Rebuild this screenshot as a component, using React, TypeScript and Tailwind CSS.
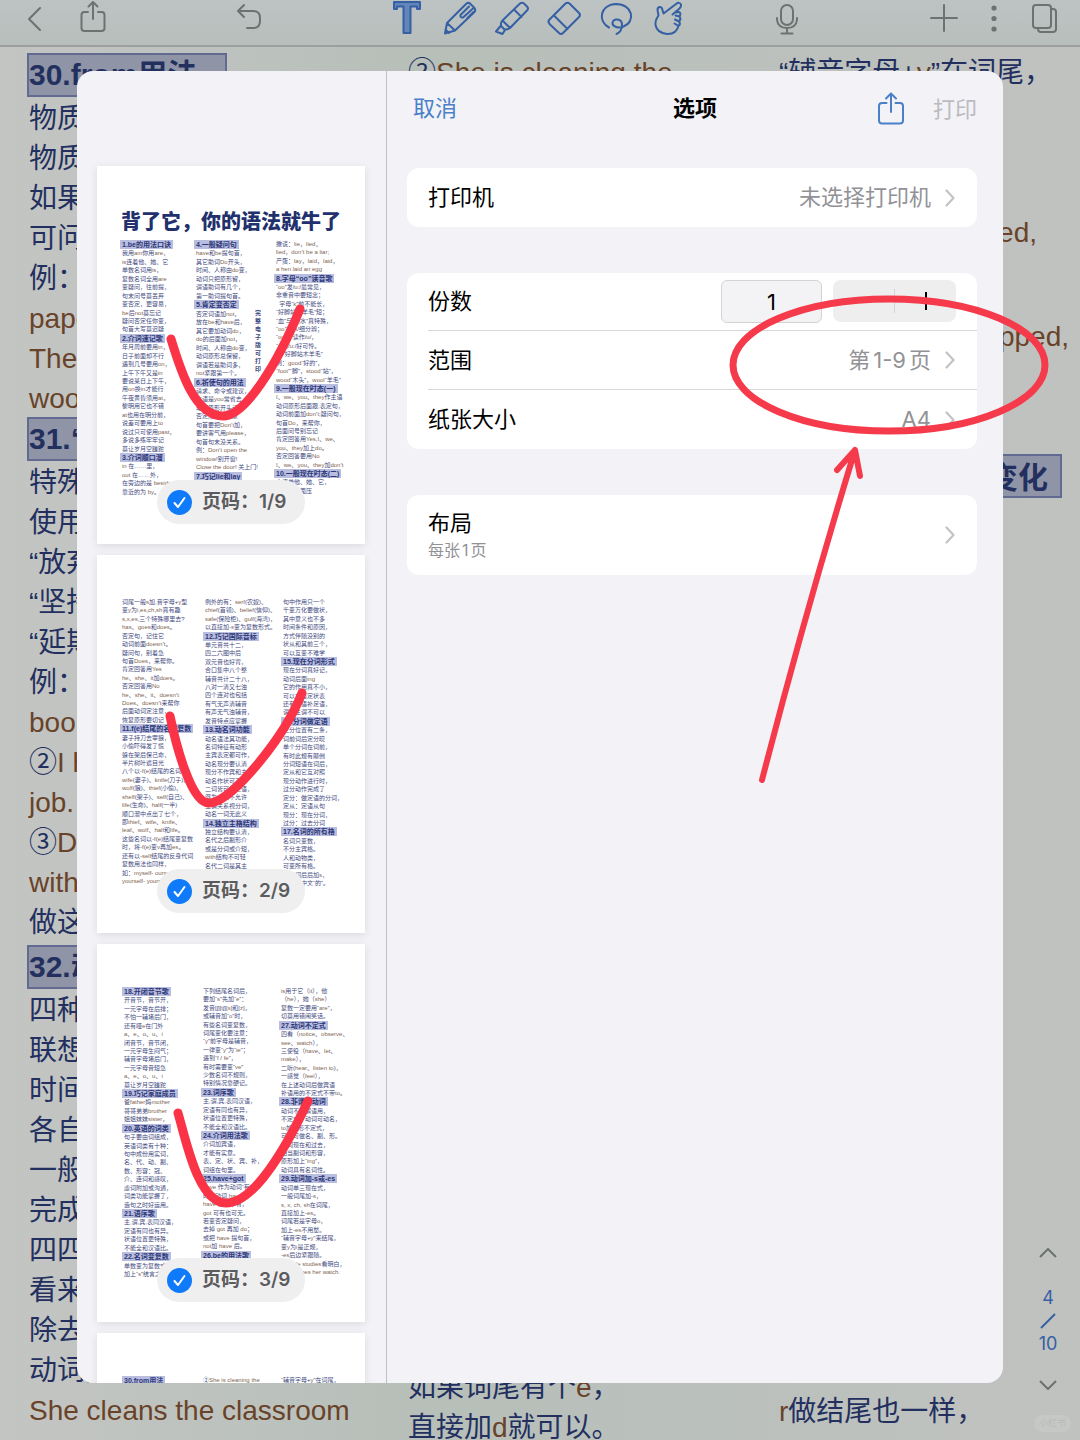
import { useState } from 'react'
import type { ReactNode } from 'react'

interface Column {
  height: string
  // Lines starting with "#" are section titles
  lines: string[]
}

interface Sheet {
  title?: string
  side?: string
  grid: string
  mark?: string
  columns: Column[]
}

const NOTES_LEFT: string[][] = [
  ['#30.from用法', '物质原料看得见，', '物质原料看不见，', '如果来自某地方，', '可问来自何处来，', '例：', 'paper is made from', 'The desk is made of', 'wood.'],
  ['#31.“动词ing”用法', '特殊动词要牢记，', '使用动名词形式，', '“放弃享受可后悔，', '“坚持练习必完成，', '“延期避免非介意，', '例：', 'books are worth', '②I have finished my', 'job.', '③Do you mind', 'with me?', '做这件事。'],
  ['#32.动词四种形式', '四种形式要记清，', '联想记忆很容易，', '时间不同形不同，', '各自变化有规律。', '一般现在三单式，', '完成过去分词式，', '四四方方记心间，', '看来看去不复杂，', '除去特殊要记牢，', '动词变化并不难。', 'She cleans the classroom'],
]

const SHEETS: Sheet[] = [
  {
    title: '背了它，你的语法就牛了',
    side: '完整电子版可打印',
    grid: 'grid-cols-[74px_80px_1fr] pl-[25px] pt-2',
    mark: 'M74 173C84 206 98 250 126 250C148 250 180 199 203 143',
    columns: [
      {
        height: 'h-[256px]',
        lines: ['#1.be的用法口诀', '我用am你用are，', 'is连着他、她、它', '单数名词用is，', '复数名词全用are', '变疑问，往前提，', '句末问号莫丢弃', '变否定，更容易，', 'be后not莫忘记', '疑问否定任你变，', '句首大写莫迟疑', '#2.介词速记歌', '年月周前要用in，', '日子前面却不行', '遇到几号要用on，', '上午下午又是in', '要说某日上下午，', '用on换in才能行', '午夜黄昏须用at，', '黎明用它也不错', 'at也用在明分前，', '说差可要用上to', '说过只可使用past，', '多说多练牢牢记', '莫让岁月空蹉跎', '#3.介词顺口溜', 'in 在……里，', 'out 在……外，', '在旁边的是 beside', '靠近的为 by。'],
      },
      {
        height: 'h-[241px]',
        lines: ['#4.一般疑问句', 'have和be提句首，', '其它助词Do开头，', '时间、人称由do变，', '动词只把原形留，', '谓语助词有几个，', '第一助词提句首。', '#5.肯定变否定', '否定词语加not，', '放在be和have后，', '其它要加动词do，', 'do的后面加not，', '时间、人称由do变，', '动词原形总保留，', '谓语若是助词多，', 'not紧跟第一个。', '#6.祈使句的用法', '请求、命令或建议，', '主语是you常省去', '动词原形开头记', '否定形式要注意', '句首要把Don’t加，', '要讲客气用please，', '句首句末没关系。', '例：Don’t open the', 'window!别开窗!', 'Close the door! 关上门!', '#7.巧记lie和lay'],
      },
      {
        height: 'h-[255px]',
        lines: ['撒谎：lie，lied，', 'lied，don’t be a liar;', '产蛋：lay，laid，laid，', 'a hen laid an egg', '#8.字母“oo”读音歌', '“oo”发/u:/最常见，', '非重音中要短念；', '  字母“k”前不能长，', '“好脚站木羊毛”短；', '“血”与“洪水”真特殊，', '“oo”读/ʌ/细分辨；', '“oo”“r”读作/u/，', '“r”读/u:/好可怜。', '    “好脚站木羊毛”', '例：good“好的”，', '“foot”“脚”，stood“站”，', 'wood“木头”，wool“羊毛”', '#9.一般现在时态(一)', 'I、we、you、they作主语', '动词原形后面跟;表定句，', '动词前面加don’t;疑问句，', '句首Do，来帮你，', '后面问号别忘记', '肯定回答用Yes,I、we、', 'you、they加上do。', '否定回答要用No', 'I、we、you、they加don’t', '#10.一般现在时态(二)', '主语单他、她、它，', '动词要后面压'],
      },
    ],
  },
  {
    grid: 'grid-cols-[83px_78px_1fr] pl-[25px] pt-[43px]',
    mark: 'M73 161C79 190 94 248 112 248C134 248 187 183 205 138',
    columns: [
      {
        height: 'h-[287px]',
        lines: ['词尾一般s加,音字母+y型', '变y为i,es,ch,sh真有趣', 's,x,es,三个特殊哪里去?', 'has、goes和does。', '否定句，记住它', '动词前面doesn’t。', '疑问句，别着急', '句首Does，来帮你。', '肯定回答用Yes', 'he、she、it加does。', '否定回答用No', 'he、she、it、doesn’t', 'Does、doesn’t来帮你', '后面动词定注意，', '恢复原形要切记', '#11.f(e)结尾的名词复数', '妻子持刀去宰狼，', '小偷吓得发了慌', '躲在架后保己命，', '半片树叶遮目光', '八个以-f(e)结尾的名词：', 'wife(妻子)、knife(刀子)、', 'wolf(狼)、thief(小偷)、', 'shelf(架子)、self(自己)、', 'life(生命)、half(一半)', '顺口溜中点出了七个，', '即thief、wife、knife、', 'leaf、wolf、half和life。', '这些名词以-f(e)结尾变复数', '时，将-f(e)变v再加es。', '还有以-self结尾的反身代词', '复数用法也同样，', '如：myself- ourselves', 'yourself- yourselves'],
      },
      {
        height: 'h-[272px]',
        lines: ['例外的有：serf(农奴)、', 'chief(首领)、belief(信仰)、', 'safe(保险柜)、gulf(海湾)，', '以直接加-s变为复数形式。', '#12.巧记国际音标', '单元音共十二，', '四二六图中后', '双元音也好背，', '合口集中八个整', '辅音共计二十八，', '八对一清又七浊', '四个连对也包括', '有气无声清辅音', '有声无气浊辅音，', '发音特点应掌握', '#13.动名词功能', '动名语法其功能，', '名词特征有动形', '主宾表定都可作，', '动名现分要认清', '现分不作宾和主，', '动名作状可不行', '二词皆可作定语，', '混为一谈不允许', '主谓关系视分词，', '动名一词无此义', '#14.独立主格结构', '独立结构要认清，', '名代之后副形介', '或是分词或介短，', 'with结构不可轻', '名代二词是其主'],
      },
      {
        height: 'h-[289px]',
        lines: ['句中作用只一个', '千变万化要做状，', '其中意义也不多', '时间条件和原因，', '方式伴随没别的', '状从和其前三个，', '可以互变不难学', '#15.现在分词形式', '现在分词真好记，', '动词后面ing', '它的作用真不小，', '可以充当定状表', '还有宾语补足语，', '谓语主谓不可以', '#16.分词做定语', '定分位置有二条，', '词前词后定分晓', '单个分词在词前，', '有时此规有颠倒', '分词短语在词后，', '定从和它互对照', '现分动作进行时，', '过分动作完成了', '定分：做定语的分词，', '定从：定语从句', '现分：现在分词，', '过分：过去分词', '#17.名词的所有格', '名词只变数，', '不分主宾格。', '人和动物类，', '可变所有格。', '单数词后后加s，', '翻译成中文“的”。'],
      },
    ],
  },
  {
    grid: 'grid-cols-[79px_78px_1fr] pl-[27px] pt-[43px]',
    mark: 'M81 169C89 196 101 259 129 259C157 259 189 204 211 157',
    columns: [
      {
        height: 'h-[291px]',
        lines: ['#18.开闭音节歌', '开音节，音节开，', '一元字母在后排；', '不怕一辅堵后门，', '还有哑e在门外', 'a、e、o、u、i', '闭音节，音节闭，', '一元字母生闷气；', '辅音字母堵后门，', '一元字母音短急', 'a、e、o、u、i', '莫让岁月空蹉跎', '#19.巧记家庭成员', '爸father妈mother', '哥哥弟弟brother', '姐姐妹妹sister，', '#20.英语的词类', '句子要由词组成，', '英语词类有十种：', '句中成份用实词，', '名、代、动、副、', '数、形容：冠、', '介、连词和感叹，', '虚词附加或沟通，', '词类功能掌握了，', '造句之时好运用。', '#21.语序歌', '主,谓,宾,表同汉语，', '定语有同也有异。', '状语位置更特殊，', '不能全和汉语比。', '#22.名词变复数', '单数变为复数式，', '加上“s”统言之。'],
      },
      {
        height: 'h-[273px]',
        lines: ['下列结尾名词后，', '要加“s”先加“e”：', '发音[ʃ][tʃ][s]和[z]，', '或辅音加“o”时，', '有些名词变复数，', '词尾变化要注意：', '“y”前字母是辅音，', '一律变“y”为“ie”；', '遇到“f / fe”，', '有时需要变“ve”', '少数名词不规则，', '特别情况靠硬记。', '#23.词序歌', '主,谓,宾,表同汉语，', '定语有同也有异，', '状语位置更特殊，', '不能全和汉语比。', '#24.介词用法歌', '介词加宾语，', '才能有实意。', '表、定、状、宾、补，', '词组在句里。', '#25.have+got', 'have 作为动词“有”，', '时常动词 have，', 'have 在句中有，', 'got 可有也可无。', '若变否定疑问，', '去掉 got 再加 do；', '或把 have 提句首，', 'not加 have 后。', '#26.be的用法歌'],
      },
      {
        height: 'h-[289px]',
        lines: ['is用于它（it），他', '（he），她（she）', '复数一定要用“are”，', '切莫用错闹笑话。', '#27.动词不定式', '四看（notice、observe、', 'see、watch），', '三使役（have、let、', 'make），', '二听(hear、listen to)，', '一感觉（feel），', '在上述动词后做宾语', '补语用的不定式不带to。', '#28.非谓语动词', '动词不作谓语用，', '不定式、动词可动名，', 'to加原形不定式，', '可以可做名、副、形。', '分词现在和过去，', '相当副词和形容，', '原形加上“ing”，', '动词具有名词性。', '#29.动词加-s或-es', '动词单三现在式，', '一般词尾加-s，', 's, x, ch, sh在词尾，', '直接加上-es。', '词尾若是字母o，', '加上-es不用愁。', '“辅音字母+y”来结尾，', '变y为i是正规，', '-es后边紧跟随。', '例：He studies看明白，', 'He washes her watch.'],
      },
    ],
  },
  {
    grid: 'grid-cols-[79px_78px_1fr] pl-[27px] pt-[43px]',
    columns: [
      { height: 'h-[10px]', lines: ['#30.from用法'] },
      { height: 'h-[10px]', lines: ['②She is cleaning the'] },
      { height: 'h-[10px]', lines: ['“辅音字母+y”在词尾，'] },
    ],
  },
]

// English words are brown, everything else stays navy
function Mixed({ text, className }: { text: string; className: string }) {
  return (
    <>
      {text.split(/([A-Za-z][A-Za-z' .?]*)/).map((part, i) =>
        i % 2 ? <span key={i} className={className}>{part}</span> : part
      )}
    </>
  )
}

function ToolButton({ label, tone = 'gray', children }: { label: string; tone?: 'gray' | 'blue'; children: ReactNode }) {
  return (
    <button aria-label={label} className={`size-9 shrink-0 ${tone === 'blue' ? 'text-[#3560a4]' : 'text-[#6d7271]'}`}>
      <svg viewBox="0 0 36 36" className="size-9" fill="none" stroke="currentColor" strokeWidth="2" strokeLinecap="round" strokeLinejoin="round">
        {children}
      </svg>
    </button>
  )
}

function Toolbar() {
  return (
    <header className="flex h-[47px] shrink-0 items-start border-b-2 border-[#9b9f9f] bg-linear-to-b from-[#bdc3c3] to-[#b8bebb] pr-[18px] pl-[17px]">
      <div className="flex gap-[22px]">
        <ToolButton label="返回">
          <path d="M23 8 12 19l11 11" />
        </ToolButton>
        <ToolButton label="分享">
          <path d="M13 12H9.500Q6.500 12 6.500 15V28Q6.500 31 9.500 31H26.500Q29.500 31 29.500 28V15Q29.500 12 26.500 12H23M18 19V2M13.500 6.500 18 2l4.500 4.500" />
        </ToolButton>
      </div>
      <div className="ml-[120px]">
        <ToolButton label="撤销">
          <path d="M13 5 7 11l6 6M7 11H22Q29 11 29 18V21Q29 28 22 28H16" />
        </ToolButton>
      </div>
      <div className="ml-[123px] flex gap-4">
        <ToolButton label="文本" tone="blue">
          <path d="M4 2H30V9H27V6.500H20.500V33H13.500V6.500H7V9H4Z" fill="#6285ba" />
        </ToolButton>
        <ToolButton label="钢笔" tone="blue">
          <path d="M3 33.500 5 23 24.500 3.500Q26.500 2 28.500 4L32.500 8Q34 10 32.500 12L13 30.500ZM5 23 13 30.500M3.500 29.500 7 33M27 6.500 18.500 15Q18 18 21 17.500L31 8.500M25 18.500 31.500 12" />
        </ToolButton>
        <ToolButton label="荧光笔" tone="blue">
          <path d="M8.500 20.500 26 3.500Q28 2 30 3.500L33 6.500Q35 8.500 33 10.500L16 28ZM20 9.500 27.500 17M8.500 20.500Q6 23 7.500 26.500L10.500 29.500Q13 30 16 28M6.500 26 2 31.500 8.500 34 11 30" />
        </ToolButton>
        <ToolButton label="橡皮" tone="blue">
          <path d="M3.500 19.500 19.500 3.500Q21.500 2 23.500 3.500L33 13Q35 15 33 17L17 33Q15 35 13 33L3.500 24Q1.500 21.500 3.500 19.500ZM8 15.500 21.500 29" />
        </ToolButton>
        <ToolButton label="套索" tone="blue">
          <path d="M11 27.500C0 22 1 5 18 4C35 4 38 22 25.500 26.500C21 28.500 14 27 14.500 22.500C16 17.500 24 19 24 24.500Q24 32 18.500 34" />
        </ToolButton>
        <ToolButton label="手势" tone="blue">
          <path d="M8.500 15.500 7.500 10Q7.500 7 10 7Q12 7 12.500 10L13.500 13.500 26 4Q29.500 1.500 31 4.500Q31.500 6.500 29.500 8.500L22.500 14.500M25 12.500 29 12Q31.500 13 29.500 16.500M25.500 15.500 29.500 16.500Q31.500 19 29 21.500M25 19.500 29 21.500Q31 24 28.500 26M24.500 23.500 28.500 26Q26 34.500 17 34Q7 33 5.500 25Q5 20.500 8.500 15.500" />
        </ToolButton>
      </div>
      <div className="ml-[83px]">
        <ToolButton label="录音">
          <rect x="12" y="5" width="12" height="20" rx="6" />
          <path d="M8 18V20Q9 28 18 28Q27 28 28 20V18M18 28V33M12.500 33.500H23.500" />
        </ToolButton>
      </div>
      <div className="ml-auto flex gap-[14px]">
        <ToolButton label="添加">
          <path d="M18 5V31M5 18H31" />
        </ToolButton>
        <ToolButton label="更多">
          <g fill="currentColor" stroke="none">
            <circle cx="18" cy="8" r="2.600" />
            <circle cx="18" cy="18.500" r="2.600" />
            <circle cx="18" cy="29" r="2.600" />
          </g>
        </ToolButton>
        <ToolButton label="页面">
          <rect x="7" y="5" width="18" height="23" rx="3" />
          <path d="M25 9H27Q30 9 30 12V29Q30 32 27 32H15Q12 32 12 29" />
        </ToolButton>
      </div>
    </header>
  )
}

function NoteLine({ text }: { text: string }) {
  if (text.startsWith('#')) {
    return (
      <h2 className="h-11 w-[200px] overflow-hidden border-2 border-[#626a91] bg-[#8f95a6] text-[30px] leading-[40px] font-bold">
        {text.slice(1)}
      </h2>
    )
  }
  return (
    <p className="h-10 pl-[2px] leading-[44px]">
      <Mixed text={text} className="text-[#694329]" />
    </p>
  )
}

function Notes() {
  return (
    <main className="grid flex-1 grid-cols-[381px_371px_1fr] pt-[6px] pl-[27px] text-[28px] whitespace-nowrap text-[#23305f]">
      <div>
        {NOTES_LEFT.map((section, i) => (
          <section key={i} className="last:mt-1">
            {section.map((line) => (
              <NoteLine key={line} text={line} />
            ))}
          </section>
        ))}
      </div>
      <div className="flex flex-col justify-between leading-[40px]">
        <p><Mixed text="②She is cleaning the" className="text-[#694329]" /></p>
        <div className="-mb-2">
          <p>如果词尾有个<span className="text-[#694329]">e</span>，</p>
          <p>直接加<span className="text-[#694329]">d</span>就可以。</p>
        </div>
      </div>
      <div className="flex flex-col leading-[40px]">
        <p>“辅音字母+<span className="text-[#694329]">y</span>”在词尾，</p>
        <p className="mt-12">先变字母再加上，</p>
        <p className="mt-8 w-[258px] text-right text-[#694329]">studied, carried,</p>
        <p className="mt-16 w-[290px] text-right text-[#694329]">planned, stopped,</p>
        <h2 className="mt-[97px] h-11 w-[283px] border-2 border-[#626a91] bg-[#8f95a6] pr-3 text-right text-[30px] leading-[44px] font-bold">动词变化</h2>
        <p className="mt-auto mb-2"><span className="text-[#694329]">r</span>做结尾也一样，</p>
      </div>
    </main>
  )
}

function SheetColumn({ column }: { column: Column }) {
  return (
    <div className={`flex flex-col items-start justify-between ${column.height}`}>
      {column.lines.map((line, i) =>
        line.startsWith('#') ? (
          <p key={i} className="-ml-[2px] bg-[#b9bee0] px-[2px] text-[7px] leading-[9px] font-bold text-[#2c3778]">{line.slice(1)}</p>
        ) : (
          <p key={i} className="whitespace-pre"><Mixed text={line} className="text-[#80654f]" /></p>
        )
      )}
    </div>
  )
}

function SheetPreview({ sheet, page }: { sheet: Sheet; page: number }) {
  const [selected, setSelected] = useState(true)

  return (
    <li className="relative h-[378px] shrink-0 overflow-hidden bg-white text-[6px] leading-[8px] whitespace-nowrap text-[#3f4a80] shadow-[0_2px_8px_rgba(0,0,0,0.1)]">
      {sheet.title && (
        <h3 className="pt-[46px] text-center text-[20px] leading-[20px] font-black text-[#22306e]">{sheet.title}</h3>
      )}
      <div className={`grid ${sheet.grid}`}>
        {sheet.columns.map((column, i) => (
          <SheetColumn key={i} column={column} />
        ))}
      </div>
      {sheet.side && (
        <p className="absolute top-[143px] left-[158px] w-[7px] leading-[8px] font-bold whitespace-normal">{sheet.side}</p>
      )}
      {sheet.mark && (
        <svg viewBox="0 0 268 378" className="absolute inset-0 size-full" fill="none">
          <path d={sheet.mark} stroke="#fa3446" strokeWidth="9" strokeLinecap="round" />
        </svg>
      )}
      {sheet.mark && (
        <label className="absolute bottom-5 left-1/2 flex h-11 w-[148px] -translate-x-1/2 items-center gap-[10px] rounded-full bg-[#efeff0] pl-[10px] font-['Inter','Noto_Sans_CJK_SC',sans-serif] text-[19px] font-semibold text-[#5c5c5f]">
          <span className="grid size-[25px] place-items-center">
            <input
              type="checkbox"
              checked={selected}
              onChange={() => setSelected(!selected)}
              className="col-start-1 row-start-1 size-[25px] appearance-none rounded-full bg-gray-300 checked:bg-[#0f7bfa]"
            />
            <svg viewBox="0 0 25 25" className="pointer-events-none col-start-1 row-start-1 size-[25px]" fill="none" stroke="white" strokeWidth="2" strokeLinecap="round" strokeLinejoin="round">
              <path d="M7.500 13 11 17 17.500 8" />
            </svg>
          </span>
          <span>页码：{page}/9</span>
        </label>
      )}
    </li>
  )
}

function Chevron() {
  return (
    <svg viewBox="0 0 10 18" className="h-[18px] w-[10px]" fill="none" stroke="#c3c3c6" strokeWidth="2.200" strokeLinecap="round" strokeLinejoin="round">
      <path d="M1.500 1.500 8.500 9l-7 7.500" />
    </svg>
  )
}

function OptionRow({ label, value }: { label: string; value: ReactNode }) {
  return (
    <button className="flex h-[59px] w-full items-center justify-between pr-[22px] text-left">
      <span>{label}</span>
      <span className="flex items-center gap-[14px] text-[#929296]">
        <span className="flex gap-[3px]">{value}</span>
        <Chevron />
      </span>
    </button>
  )
}

function PrintOptions() {
  const [copies, setCopies] = useState(1)

  return (
    <section className="min-w-0 flex-1 pr-[26px] pl-5 font-['Inter','Noto_Sans_CJK_SC',sans-serif] text-[22px] text-black">
      <header className="flex h-[97px] items-start justify-between pt-[21px] pl-[6px] leading-[32px]">
        <button className="w-[100px] text-left text-[#4a80c8]">取消</button>
        <h1 className="font-bold">选项</h1>
        <div className="flex w-[100px] justify-between">
          <button aria-label="共享" className="text-[#4a80c8]">
            <svg viewBox="0 0 28 34" className="h-[34px] w-[28px]" fill="none" stroke="currentColor" strokeWidth="2" strokeLinecap="round" strokeLinejoin="round">
              <path d="M9.500 11H5Q2 11 2 14V28.500Q2 31.500 5 31.500H23Q26 31.500 26 28.500V14Q26 11 23 11H18.500M14 20V1.500M9 6.500 14 1.500l5 5" />
            </svg>
          </button>
          <button disabled className="text-[#bbbbbf]">打印</button>
        </div>
      </header>

      <div className="flex flex-col gap-[46px]">
        <div className="rounded-xl bg-white pl-[21px]">
          <OptionRow label="打印机" value="未选择打印机" />
        </div>

        <div className="divide-y divide-[#d8d8da] rounded-xl bg-white pl-[21px]">
          <div className="flex h-[58px] items-center justify-between pr-[21px]">
            <label htmlFor="copies">份数</label>
            <div className="flex gap-[11px]">
              <input
                id="copies"
                inputMode="numeric"
                value={copies}
                onChange={(e) => setCopies(Number(e.target.value) || 1)}
                className="h-[43px] w-[101px] rounded-md border border-[#d3d3d6] bg-[#f3f3f6] text-center"
              />
              <div className="flex h-[42px] w-[123px] items-center rounded-lg bg-[#eeeeef]">
                <button aria-label="减少" onClick={() => setCopies(Math.max(1, copies - 1))} className="grid flex-1 place-items-center">
                  <svg viewBox="0 0 18 18" className="size-[18px]" stroke="#9a9a9c" strokeWidth="2"><path d="M1 9H17" /></svg>
                </button>
                <span className="h-6 w-px bg-[#d5d5d7]" />
                <button aria-label="增加" onClick={() => setCopies(copies + 1)} className="grid flex-1 place-items-center">
                  <svg viewBox="0 0 18 18" className="size-[18px]" stroke="black" strokeWidth="2"><path d="M1 9H17M9 0V18" /></svg>
                </button>
              </div>
            </div>
          </div>
          <OptionRow label="范围" value={<><span>第</span><span>1-9</span><span>页</span></>} />
          <OptionRow label="纸张大小" value="A4" />
        </div>

        <button className="flex h-20 w-full items-center justify-between rounded-xl bg-white pr-[22px] pl-[21px] text-left">
          <span>
            <span className="block leading-[30px]">布局</span>
            <span className="flex gap-[2px] text-base leading-6 text-[#929296]"><span>每张</span><span>1</span><span>页</span></span>
          </span>
          <Chevron />
        </button>
      </div>
    </section>
  )
}

function PrintDialog() {
  return (
    <div role="dialog" aria-label="打印选项" className="absolute inset-x-[77px] top-[71px] bottom-[57px] flex overflow-hidden rounded-2xl bg-[#f2f2f7]">
      <aside className="w-[310px] shrink-0 overflow-hidden border-r border-[#bfbfc4] pt-[95px] pr-[21px] pl-5">
        <ul className="flex flex-col gap-[11px]">
          {SHEETS.map((sheet, i) => (
            <SheetPreview key={i} sheet={sheet} page={i + 1} />
          ))}
        </ul>
      </aside>
      <PrintOptions />
    </div>
  )
}

function PageNav() {
  return (
    <nav className="absolute right-[18px] bottom-[50px] flex w-7 flex-col items-center font-['Inter',sans-serif] text-[18px] leading-[24px] text-[#3560a4]">
      <button aria-label="上一页" className="mb-7 text-[#6d7271]">
        <svg viewBox="0 0 18 10" className="h-[10px] w-[18px]" fill="none" stroke="currentColor" strokeWidth="2"><path d="M1 9 9 1l8 8" /></svg>
      </button>
      <span>4</span>
      <svg viewBox="0 0 16 16" className="my-[3px] size-4" stroke="currentColor" strokeWidth="2"><path d="M1 15 15 1" /></svg>
      <span>10</span>
      <button aria-label="下一页" className="mt-6 text-[#6d7271]">
        <svg viewBox="0 0 18 10" className="h-[10px] w-[18px]" fill="none" stroke="currentColor" strokeWidth="2"><path d="M1 1 9 9l8-8" /></svg>
      </button>
    </nav>
  )
}

export default function App() {
  return (
    <div className="relative flex h-screen flex-col overflow-hidden bg-linear-to-r from-[#c3c5c3] via-[#b7bfb9] via-40% to-[#c0c2c0] font-['Liberation_Sans','Noto_Sans_CJK_SC',sans-serif]">
      <Toolbar />
      <Notes />
      <PageNav />
      <span className="absolute right-[9px] bottom-2 rounded-full bg-[#c6c8c6] px-[5px] text-[9px] leading-[17px] text-[#b9bbb9]">小红书</span>
      <PrintDialog />

      {/* Hand-drawn circle and arrow around the page range */}
      <svg viewBox="0 0 330 500" className="pointer-events-none absolute top-[290px] right-[25px] h-[500px] w-[330px]" fill="none" stroke="#f53b4b" strokeLinecap="round" strokeLinejoin="round">
        <ellipse cx="164" cy="75" rx="156" ry="66" strokeWidth="7" />
        <path d="M37 490Q81 320 130 160M112 180 130 160 135 186" strokeWidth="6" />
      </svg>
    </div>
  )
}
